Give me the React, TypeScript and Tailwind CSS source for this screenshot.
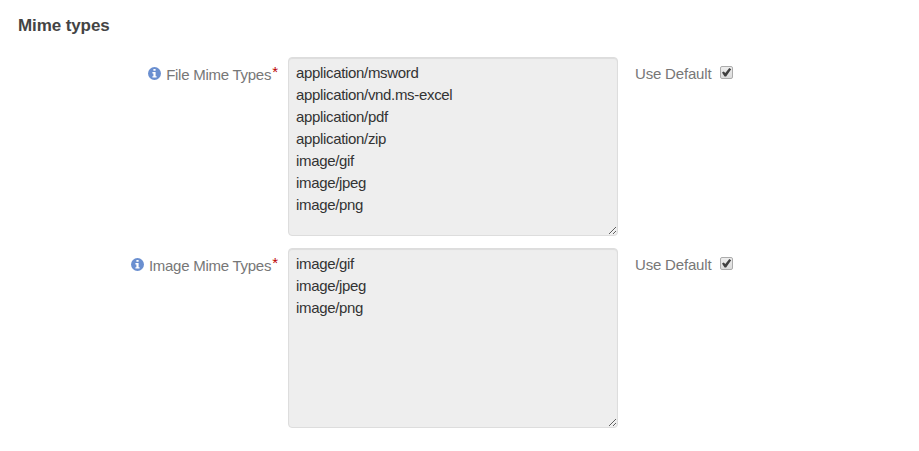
import { useState } from "react";

type MimeField = { id: string; label: string; values: string[]; boxClass: string };

const fields: MimeField[] = [
  {
    id: "file-mime-types",
    label: "File Mime Types",
    values: [
      "application/msword",
      "application/vnd.ms-excel",
      "application/pdf",
      "application/zip",
      "image/gif",
      "image/jpeg",
      "image/png",
    ],
    boxClass: "h-[179px]",
  },
  {
    id: "image-mime-types",
    label: "Image Mime Types",
    values: ["image/gif", "image/jpeg", "image/png"],
    boxClass: "h-[180px]",
  },
];

function InfoIcon() {
  return (
    <svg viewBox="0 0 13 13" className="mt-[10px] mr-[5px] size-[13px] shrink-0" aria-hidden="true">
      <circle cx="6.5" cy="6.5" r="6.5" fill="#6a8fd0" />
      <path d="M5.4 2h2.2v1.8H5.4zM4.4 5h3.2v4.2h1V10.6H4.4V9.2h1V6.4h-1z" fill="#fff" />
    </svg>
  );
}

function Checkbox({ label }: { label: string }) {
  const [checked, setChecked] = useState(true);
  return (
    <button
      type="button"
      role="checkbox"
      aria-checked={checked}
      aria-label={label}
      onClick={() => setChecked(!checked)}
      className="mt-[9px] ml-[9px] flex size-[13px] items-center justify-center rounded-[2px] border border-[#acacac] bg-linear-to-b from-[#ededed] to-[#dcdcdc]"
    >
      {checked && (
        <svg viewBox="0 0 11 11" className="size-[11px] shrink-0" aria-hidden="true">
          <path d="M1 5.6 2.7 4.4 4.3 6.1 8.3 1 10.2 2.2 5.1 9.4H3.6z" fill="#404040" />
        </svg>
      )}
    </button>
  );
}

function FieldRow({ field }: { field: MimeField }) {
  return (
    <div className="flex items-start">
      <div className="flex w-[278px] items-start justify-end">
        <InfoIcon />
        <label
          htmlFor={field.id}
          className="pt-[7px] leading-[22px] tracking-[-0.26px] whitespace-nowrap text-[#777]"
        >
          {field.label}
        </label>
        <span className="ml-px pt-[4px] leading-[22px] text-[#b00]">*</span>
      </div>
      <textarea
        id={field.id}
        readOnly
        defaultValue={field.values.join("\n")}
        className={`${field.boxClass} ml-[10px] block w-[330px] resize rounded-[4px] border border-[#ddd] bg-[#eee] px-[7px] py-[4px] leading-[22px] tracking-[-0.33px] text-[#333] shadow-[inset_0_1px_1px_rgba(0,0,0,0.075)] outline-none`}
      />
      <div className="ml-[17px] flex items-start">
        <span className="pt-[6px] leading-[22px] tracking-[-0.18px] text-[#777]">Use Default</span>
        <Checkbox label={`Use Default ${field.label}`} />
      </div>
    </div>
  );
}

export default function App() {
  return (
    <main className="h-[451px] w-[919px] bg-white font-['Liberation_Sans',Arial,sans-serif] text-[15px]">
      <h2 className="pt-[15px] pl-[18px] text-[17px] leading-[22px] font-bold tracking-[-0.1px] text-[#444]">
        Mime types
      </h2>
      <div className="mt-[20px] flex flex-col gap-[12px]">
        {fields.map((field) => (
          <FieldRow key={field.id} field={field} />
        ))}
      </div>
    </main>
  );
}
